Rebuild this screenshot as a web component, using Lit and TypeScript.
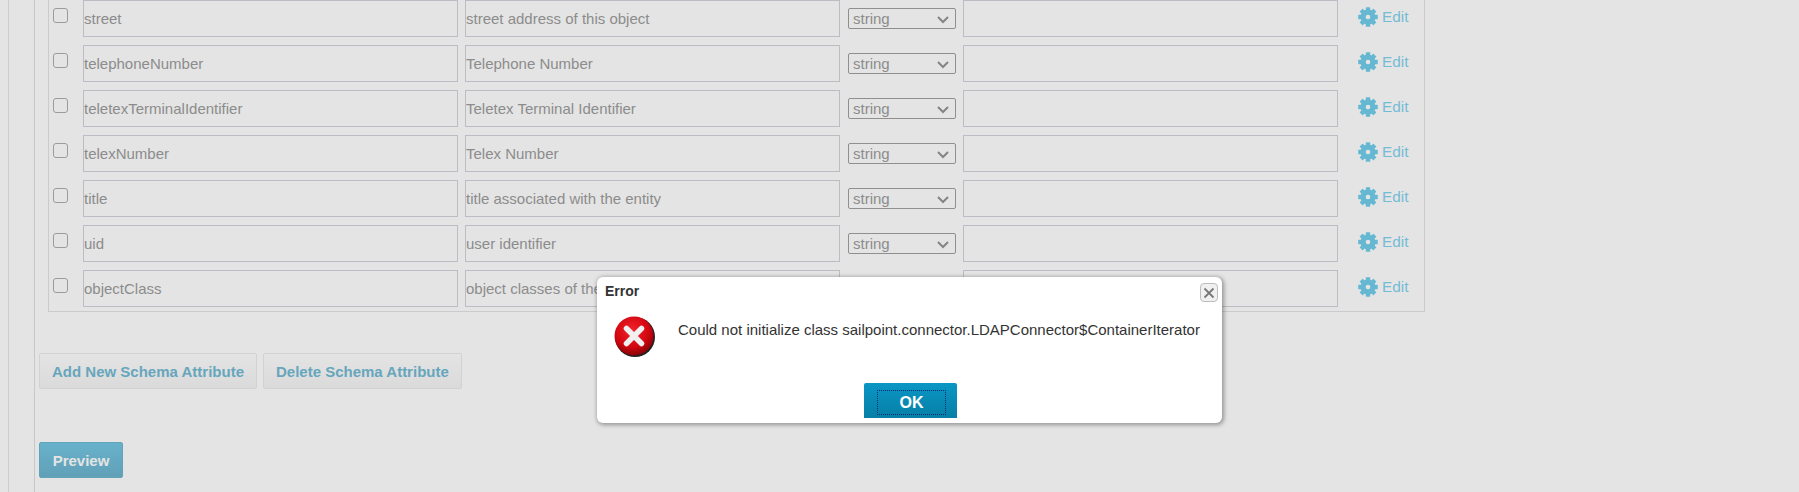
import { LitElement, html, css, svg } from "lit";
import { customElement } from "lit/decorators.js";

const ROWS = [
  ["street", "street address of this object"],
  ["telephoneNumber", "Telephone Number"],
  ["teletexTerminalIdentifier", "Teletex Terminal Identifier"],
  ["telexNumber", "Telex Number"],
  ["title", "title associated with the entity"],
  ["uid", "user identifier"],
  ["objectClass", "object classes of the entity"],
];

const gear = html`<svg class="gear" viewBox="0 0 20 20" width="20" height="20">
  ${[0, 45, 90, 135, 180, 225, 270, 315].map(
    (a) => svg`<rect x="7.8" y="0.2" width="4.4" height="5" rx="0.6" fill="#66b8d2" transform="rotate(${a} 10 10)"></rect>`
  )}
  <circle cx="10" cy="10" r="4.9" fill="none" stroke="#66b8d2" stroke-width="5.2"></circle>
</svg>`;

@customElement("app-root")
export class AppRoot extends LitElement {
  static styles = css`
    :host {
      display: block;
      position: relative;
      height: 492px;
      overflow: hidden;
      background: #e4e4e4;
      font-family: "Liberation Sans", Arial, sans-serif;
      color: #8c8c8c;
    }
    .outer {
      margin-left: 8px;
      height: 492px;
      box-sizing: border-box;
      border-left: 1px solid #cdcdcd;
      padding-left: 25px;
    }
    .inner {
      height: 492px;
      box-sizing: border-box;
      border-left: 1px solid #c8c8c8;
      padding-left: 4px;
    }
    .schema {
      margin-left: 9px;
      width: 1377px;
      box-sizing: border-box;
      border: 1px solid #cbcbcb;
      border-top: none;
      padding-bottom: 4px;
      display: flex;
      flex-direction: column;
      gap: 8px;
    }
    .row {
      display: grid;
      grid-template-columns: 27px 375px 375px 109px 375px auto;
      height: 37px;
      column-gap: 7px;
      align-items: start;
    }
    .row > .check {
      margin: 8px 0 0 4px;
      width: 15px;
      height: 15px;
      box-sizing: border-box;
      border: 1px solid #9b9b9b;
      border-radius: 3px;
      background: #e4e4e4;
    }
    .field {
      box-sizing: border-box;
      height: 37px;
      width: 375px;
      border: 1px solid #bcbdc4;
      background: transparent;
      font: 15px "Liberation Sans", Arial, sans-serif;
      color: #8c8c8c;
      padding: 0;
      margin: 0;
    }
    .pick {
      position: relative;
      margin: 8px 0 0 1px;
      box-sizing: border-box;
      width: 108px;
      height: 21px;
      border: 1px solid #8f8f8f;
      border-radius: 2px;
      font-size: 15px;
      line-height: 19px;
      padding-left: 4px;
    }
    .pick svg {
      position: absolute;
      right: 5px;
      top: 6px;
    }
    .edit {
      display: flex;
      align-items: center;
      gap: 4px;
      margin: 7px 0 0 13px;
      font-size: 15.4px;
      color: #74bcd6;
      line-height: 20px;
    }
    .gear {
      display: block;
    }
    .actions {
      display: flex;
      gap: 6px;
      margin-top: 41px;
    }
    .btn {
      box-sizing: border-box;
      height: 36px;
      padding: 0 12px;
      border: 1px solid #d2d2d2;
      border-radius: 2px;
      background: linear-gradient(#e4e4e4, #dadada);
      color: #66a6bd;
      font: bold 15px "Liberation Sans", Arial, sans-serif;
      display: flex;
      align-items: center;
    }
    .preview {
      margin-top: 53px;
      width: 84px;
      justify-content: center;
      padding: 0;
      border-color: #62a3ba;
      background: linear-gradient(#68b1cb, #60a0b7);
      color: #e4e4e4;
    }
    .dialog {
      position: absolute;
      left: 597px;
      top: 277px;
      width: 625px;
      height: 146px;
      background: #fff;
      border-radius: 6px;
      box-shadow: 1px 1px 4px 1px rgba(0, 0, 0, 0.35);
      color: #333;
      display: flex;
      flex-direction: column;
    }
    .head {
      display: flex;
      justify-content: space-between;
      padding: 6px 4px 0 8px;
      font-weight: bold;
      font-size: 14px;
      line-height: 16px;
      height: 29px;
      box-sizing: border-box;
    }
    .close {
      box-sizing: border-box;
      width: 18px;
      height: 19px;
      border: 1px solid #bdbdbd;
      border-radius: 4px;
      background: #f0f0f0;
      display: flex;
      align-items: center;
      justify-content: center;
    }
    .body {
      display: flex;
      align-items: flex-start;
      gap: 23px;
      padding: 10px 0 0 17px;
      font-size: 15px;
      line-height: 18px;
    }
    .msg {
      margin-top: 5px;
    }
    .foot {
      display: flex;
      margin-top: 26px;
      padding-left: 267px;
    }
    .ok {
      box-sizing: border-box;
      width: 93px;
      height: 35px;
      border-radius: 2px 2px 0 0;
      background: linear-gradient(#0a96c4, #067fa6);
      padding: 7px 11px 5px 13px;
    }
    .ok span {
      display: flex;
      align-items: center;
      justify-content: center;
      height: 100%;
      border: 1px dotted #0b2a72;
      color: #fff;
      font: bold 16px "Liberation Sans", Arial, sans-serif;
    }
  `;

  render() {
    return html`
      <div class="outer">
        <div class="inner">
          <div class="schema">
            ${ROWS.map(
              ([name, desc]) => html`
                <div class="row">
                  <div class="check"></div>
                  <input class="field" .value=${name} />
                  <input class="field" .value=${desc} />
                  <div class="pick">
                    string
                    <svg width="14" height="9" viewBox="0 0 14 9">
                      <path d="M2 2l5 5 5-5" fill="none" stroke="#858585" stroke-width="2"></path>
                    </svg>
                  </div>
                  <input class="field" />
                  <div class="edit">${gear}<span>Edit</span></div>
                </div>
              `
            )}
          </div>
          <div class="actions">
            <div class="btn">Add New Schema Attribute</div>
            <div class="btn">Delete Schema Attribute</div>
          </div>
          <div class="btn preview">Preview</div>
        </div>
      </div>
      <div class="dialog">
        <div class="head">
          <span>Error</span>
          <div class="close">
            <svg width="14" height="14" viewBox="0 0 14 14">
              <path d="M2.5 2.5l9 9M11.5 2.5l-9 9" stroke="#777" stroke-width="1.8"></path>
            </svg>
          </div>
        </div>
        <div class="body">
          <svg class="stop" width="41" height="41" viewBox="0 0 41 41">
            <defs>
              <radialGradient id="ball" cx="45%" cy="35%" r="65%">
                <stop offset="0" stop-color="#f0222a"></stop>
                <stop offset="0.65" stop-color="#d40710"></stop>
                <stop offset="1" stop-color="#8a0208"></stop>
              </radialGradient>
            </defs>
            <circle cx="21" cy="21" r="20" fill="#222"></circle>
            <circle cx="20" cy="20" r="19.5" fill="url(#ball)"></circle>
            <path d="M12.5 12.5l15 15M27.5 12.5l-15 15" stroke="#f0f0f0" stroke-width="5.5" stroke-linecap="round"></path>
          </svg>
          <span class="msg">Could not initialize class sailpoint.connector.LDAPConnector$ContainerIterator</span>
        </div>
        <div class="foot">
          <div class="ok"><span>OK</span></div>
        </div>
      </div>
    `;
  }
}
